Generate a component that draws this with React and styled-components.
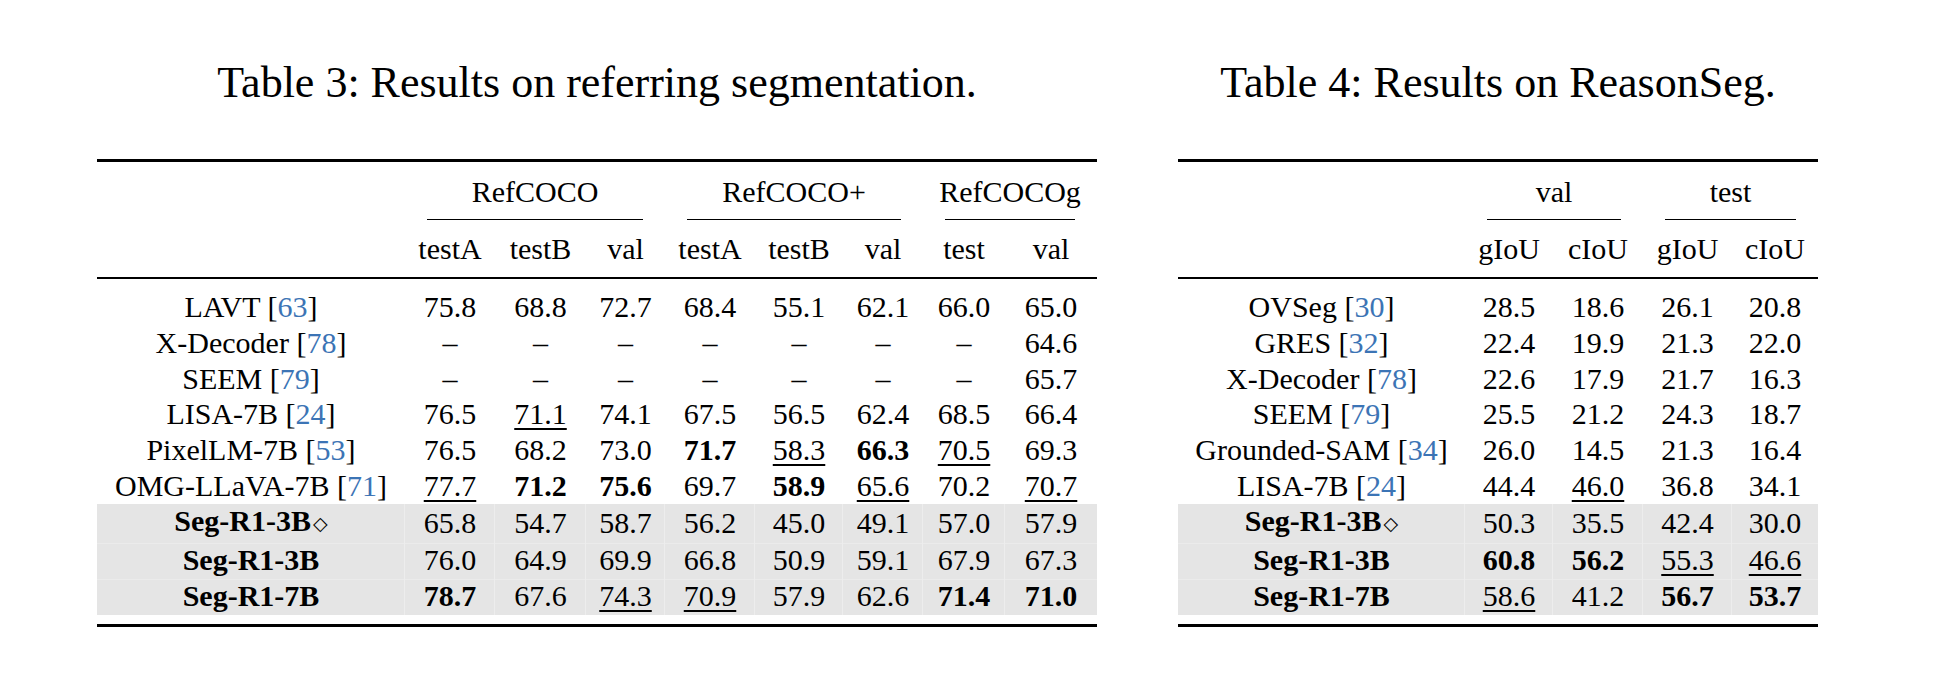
import React from "react";
import styled, { createGlobalStyle } from "styled-components";

const GlobalStyle = createGlobalStyle`
  body {
    margin: 0;
    background: #fff;
    color: #000;
    font-family: "Liberation Serif", "Times New Roman", serif;
  }
`;

const table3 = {
  caption: "Table 3: Results on referring segmentation.",
  width: 1000,
  cols: [308, 90, 91, 79, 90, 88, 80, 82, 92],
  groups: [
    { label: "RefCOCO", span: 3 },
    { label: "RefCOCO+", span: 3 },
    { label: "RefCOCOg", span: 2 },
  ],
  subs: ["testA", "testB", "val", "testA", "testB", "val", "test", "val"],
  rows: [
    { name: "LAVT", cite: "63", vals: ["75.8", "68.8", "72.7", "68.4", "55.1", "62.1", "66.0", "65.0"] },
    { name: "X-Decoder", cite: "78", vals: ["–", "–", "–", "–", "–", "–", "–", "64.6"] },
    { name: "SEEM", cite: "79", vals: ["–", "–", "–", "–", "–", "–", "–", "65.7"] },
    { name: "LISA-7B", cite: "24", vals: ["76.5", "_71.1", "74.1", "67.5", "56.5", "62.4", "68.5", "66.4"] },
    { name: "PixelLM-7B", cite: "53", vals: ["76.5", "68.2", "73.0", "*71.7", "_58.3", "*66.3", "_70.5", "69.3"] },
    { name: "OMG-LLaVA-7B", cite: "71", vals: ["_77.7", "*71.2", "*75.6", "69.7", "*58.9", "_65.6", "70.2", "_70.7"] },
    { name: "Seg-R1-3B", ours: true, diamond: true, vals: ["65.8", "54.7", "58.7", "56.2", "45.0", "49.1", "57.0", "57.9"] },
    { name: "Seg-R1-3B", ours: true, vals: ["76.0", "64.9", "69.9", "66.8", "50.9", "59.1", "67.9", "67.3"] },
    { name: "Seg-R1-7B", ours: true, vals: ["*78.7", "67.6", "_74.3", "_70.9", "57.9", "62.6", "*71.4", "*71.0"] },
  ],
};

const table4 = {
  caption: "Table 4: Results on ReasonSeg.",
  width: 640,
  cols: [287, 88, 90, 89, 86],
  groups: [
    { label: "val", span: 2 },
    { label: "test", span: 2 },
  ],
  subs: ["gIoU", "cIoU", "gIoU", "cIoU"],
  rows: [
    { name: "OVSeg", cite: "30", vals: ["28.5", "18.6", "26.1", "20.8"] },
    { name: "GRES", cite: "32", vals: ["22.4", "19.9", "21.3", "22.0"] },
    { name: "X-Decoder", cite: "78", vals: ["22.6", "17.9", "21.7", "16.3"] },
    { name: "SEEM", cite: "79", vals: ["25.5", "21.2", "24.3", "18.7"] },
    { name: "Grounded-SAM", cite: "34", vals: ["26.0", "14.5", "21.3", "16.4"] },
    { name: "LISA-7B", cite: "24", vals: ["44.4", "_46.0", "36.8", "34.1"] },
    { name: "Seg-R1-3B", ours: true, diamond: true, vals: ["50.3", "35.5", "42.4", "30.0"] },
    { name: "Seg-R1-3B", ours: true, vals: ["*60.8", "*56.2", "_55.3", "_46.6"] },
    { name: "Seg-R1-7B", ours: true, vals: ["_58.6", "41.2", "*56.7", "*53.7"] },
  ],
};

const Page = styled.div`
  display: flex;
  align-items: flex-start;
  gap: 81px;
  padding: 58px 0 0 97px;
`;

const Block = styled.div`
  width: ${(p) => p.$w}px;
  display: flex;
  flex-direction: column;
`;

const Caption = styled.div`
  font-size: 44px;
  line-height: 50px;
  text-align: center;
  white-space: nowrap;
  margin-bottom: 51px;
`;

const Frame = styled.div`
  border-top: 3px solid #000;
  border-bottom: 3px solid #000;
  padding-bottom: 9px;
`;

const Table = styled.table`
  width: 100%;
  table-layout: fixed;
  border-collapse: separate;
  border-spacing: 0;
  font-size: 30px;
`;

const Col = styled.col`
  width: ${(p) => p.$w}px;
`;

const CornerTh = styled.th`
  border-bottom: 2px solid #000;
  padding: 0;
`;

const GroupTh = styled.th`
  font-weight: normal;
  padding: 13px 0 0;
  vertical-align: top;
`;

const GroupLabel = styled.div`
  line-height: 33.7px;
  text-align: center;
  white-space: nowrap;
`;

const CmidRule = styled.div`
  height: 1px;
  background: #000;
  margin: 10px 22px 0;
`;

const SubTh = styled.th`
  font-weight: normal;
  line-height: 33.7px;
  padding: 12.4px 0 11.3px;
  text-align: center;
  white-space: nowrap;
  border-bottom: 2px solid #000;
`;

const Row = styled.tr`
  &:first-child td {
    padding-top: 11.1px;
  }
`;

const Cell = styled.td`
  line-height: 33.7px;
  padding: 0 0 2px;
  text-align: center;
  white-space: nowrap;
  background: ${(p) => (p.$gray ? "#e5e5e5" : "transparent")};
  box-shadow: ${(p) =>
    p.$gray
      ? `inset ${p.$last ? "0" : "-1px"} 0 0 #ededed${p.$top ? "" : ", inset 0 1px 0 #ebebeb"}`
      : "none"};
`;

const Name = styled.span`
  font-weight: ${(p) => (p.$bold ? "bold" : "normal")};
`;

const Cite = styled.span`
  color: #3c74b5;
`;

const Diamond = styled.span`
  font-family: "DejaVu Sans", sans-serif;
  font-weight: normal;
  font-size: 19px;
  margin-left: 2px;
  vertical-align: 1px;
`;

const Value = styled.span`
  font-weight: ${(p) => (p.$bold ? "bold" : "normal")};
  text-decoration: ${(p) => (p.$under ? "underline" : "none")};
  text-decoration-thickness: 1.5px;
  text-underline-offset: 4px;
`;

const renderValue = (v) => {
  if (v.startsWith("*")) return <Value $bold>{v.slice(1)}</Value>;
  if (v.startsWith("_")) return <Value $under>{v.slice(1)}</Value>;
  return <Value>{v}</Value>;
};

const ResultTable = ({ data }) => {
  const firstOurs = data.rows.findIndex((r) => r.ours);
  return (
    <Block $w={data.width}>
      <Caption>{data.caption}</Caption>
      <Frame>
        <Table>
          <colgroup>
            {data.cols.map((w, i) => (
              <Col key={i} $w={w} />
            ))}
          </colgroup>
          <thead>
            <tr>
              <CornerTh rowSpan={2} />
              {data.groups.map((g) => (
                <GroupTh key={g.label} colSpan={g.span}>
                  <GroupLabel>{g.label}</GroupLabel>
                  <CmidRule />
                </GroupTh>
              ))}
            </tr>
            <tr>
              {data.subs.map((s, i) => (
                <SubTh key={i}>{s}</SubTh>
              ))}
            </tr>
          </thead>
          <tbody>
            {data.rows.map((r, ri) => {
              const gray = !!r.ours;
              const top = ri === firstOurs;
              return (
                <Row key={ri}>
                  <Cell $gray={gray} $top={top}>
                    <Name $bold={r.ours}>
                      {r.name}
                      {r.diamond && <Diamond>◇</Diamond>}
                    </Name>
                    {r.cite && (
                      <>
                        {" ["}
                        <Cite>{r.cite}</Cite>]
                      </>
                    )}
                  </Cell>
                  {r.vals.map((v, vi) => (
                    <Cell key={vi} $gray={gray} $top={top} $last={vi === r.vals.length - 1}>
                      {renderValue(v)}
                    </Cell>
                  ))}
                </Row>
              );
            })}
          </tbody>
        </Table>
      </Frame>
    </Block>
  );
};

const App = () => (
  <>
    <GlobalStyle />
    <Page>
      <ResultTable data={table3} />
      <ResultTable data={table4} />
    </Page>
  </>
);

export default App;
